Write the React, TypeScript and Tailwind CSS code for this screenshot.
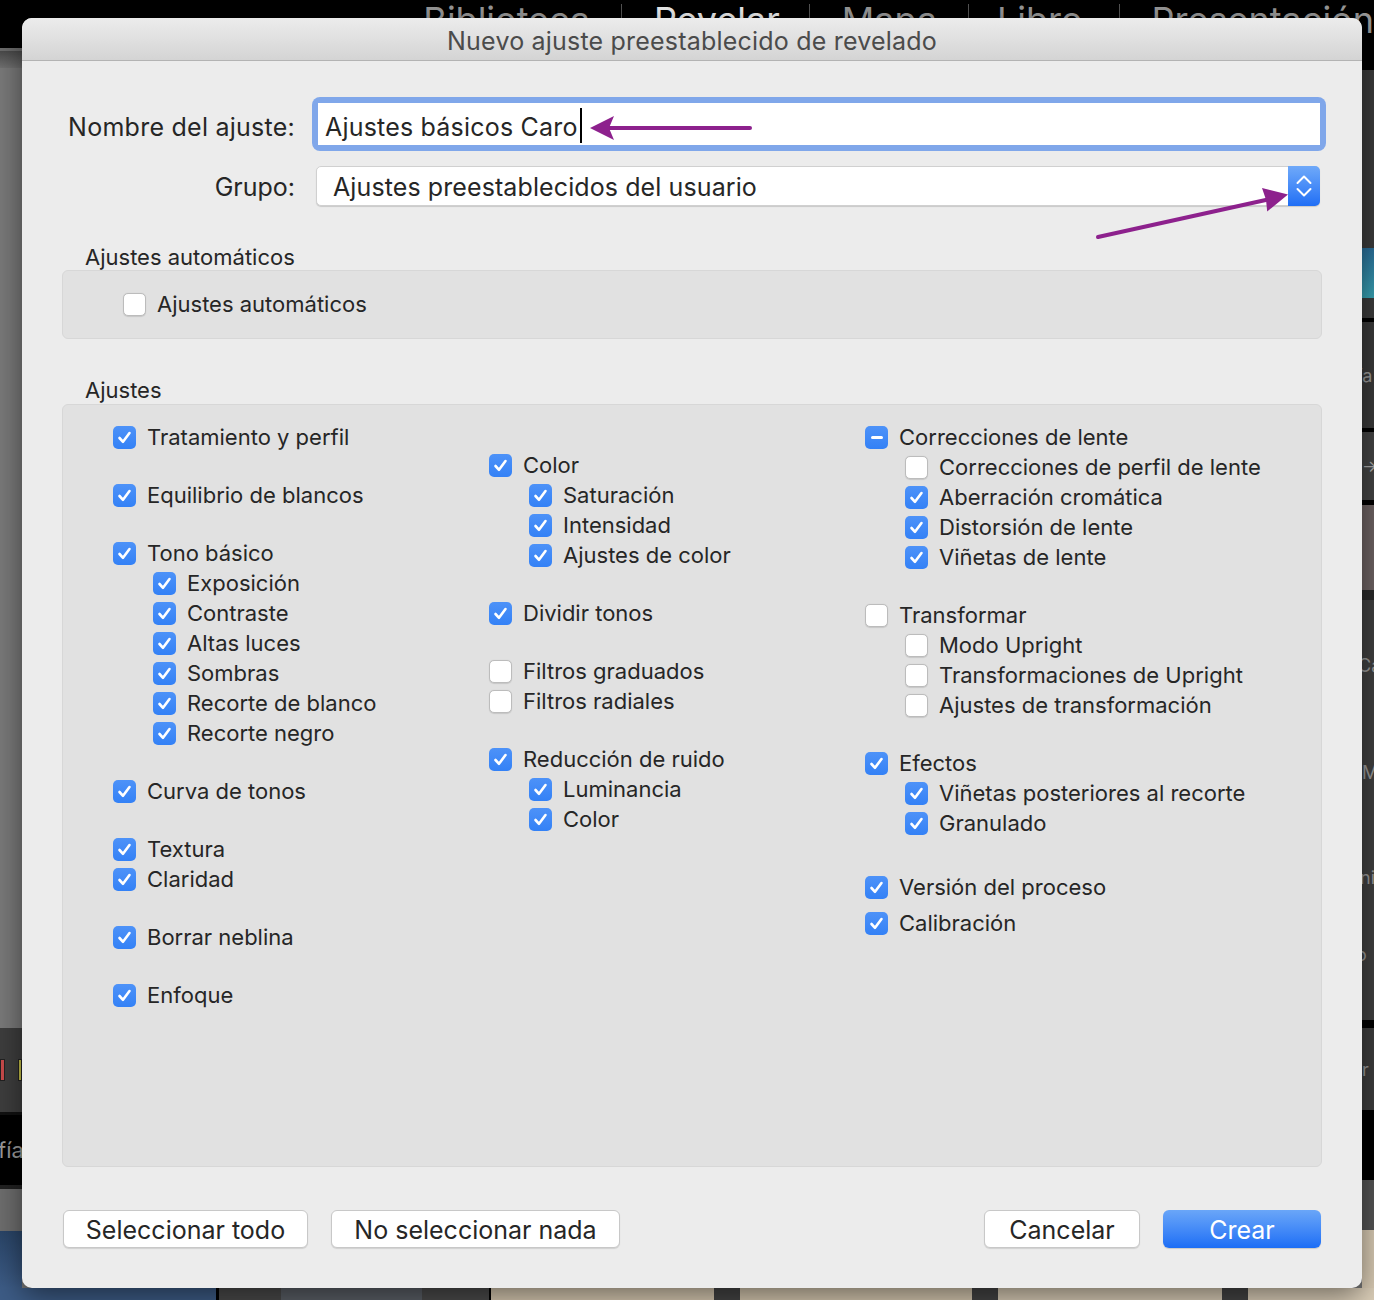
import React from "react";

type St = "on" | "off" | "mixed";
type Item = { t: string; s?: St; sub?: boolean; mt?: string };

function Box({ state }: { state: St }) {
  if (state === "off")
    return (
      <span className="w-[23px] h-[23px] shrink-0 rounded-[5px] bg-white border border-[#bcbcbc] shadow-[0_0.5px_1px_rgba(0,0,0,0.12)]" />
    );
  return (
    <span className="w-[23px] h-[23px] shrink-0 rounded-[5px] bg-gradient-to-b from-[#4d92f8] to-[#3381f6] flex items-center justify-center">
      {state === "on" ? (
        <svg width="23" height="23" viewBox="0 0 23 23">
          <path d="M6.5 12 L10 15.8 L16.5 7" fill="none" stroke="white" strokeWidth="2.6" strokeLinecap="round" strokeLinejoin="round" />
        </svg>
      ) : (
        <span className="w-[12px] h-[3px] rounded-full bg-white" />
      )}
    </span>
  );
}

function Row({ it }: { it: Item }) {
  return (
    <div className={`h-[30px] flex items-center gap-[11px] ${it.sub ? "pl-[40px]" : ""} ${it.mt ?? ""}`}>
      <Box state={it.s ?? "on"} />
      <span className="text-[22px] text-[#262626] whitespace-nowrap">{it.t}</span>
    </div>
  );
}

const col1: Item[] = [
  { t: "Tratamiento y perfil" },
  { t: "Equilibrio de blancos", mt: "mt-[28px]" },
  { t: "Tono básico", mt: "mt-[28px]" },
  { t: "Exposición", sub: true },
  { t: "Contraste", sub: true },
  { t: "Altas luces", sub: true },
  { t: "Sombras", sub: true },
  { t: "Recorte de blanco", sub: true },
  { t: "Recorte negro", sub: true },
  { t: "Curva de tonos", mt: "mt-[28px]" },
  { t: "Textura", mt: "mt-[28px]" },
  { t: "Claridad" },
  { t: "Borrar neblina", mt: "mt-[28px]" },
  { t: "Enfoque", mt: "mt-[28px]" },
];

const col2: Item[] = [
  { t: "Color", mt: "mt-[28px]" },
  { t: "Saturación", sub: true },
  { t: "Intensidad", sub: true },
  { t: "Ajustes de color", sub: true },
  { t: "Dividir tonos", mt: "mt-[28px]" },
  { t: "Filtros graduados", s: "off", mt: "mt-[28px]" },
  { t: "Filtros radiales", s: "off" },
  { t: "Reducción de ruido", mt: "mt-[28px]" },
  { t: "Luminancia", sub: true },
  { t: "Color", sub: true },
];

const col3: Item[] = [
  { t: "Correcciones de lente", s: "mixed" },
  { t: "Correcciones de perfil de lente", s: "off", sub: true },
  { t: "Aberración cromática", sub: true },
  { t: "Distorsión de lente", sub: true },
  { t: "Viñetas de lente", sub: true },
  { t: "Transformar", s: "off", mt: "mt-[28px]" },
  { t: "Modo Upright", s: "off", sub: true },
  { t: "Transformaciones de Upright", s: "off", sub: true },
  { t: "Ajustes de transformación", s: "off", sub: true },
  { t: "Efectos", mt: "mt-[28px]" },
  { t: "Viñetas posteriores al recorte", sub: true },
  { t: "Granulado", sub: true },
  { t: "Versión del proceso", mt: "mt-[34px]" },
  { t: "Calibración", mt: "mt-[6px]" },
];

function Btn({ w, children }: { w: string; children: React.ReactNode }) {
  return (
    <div className={`${w} h-[38px] rounded-[6px] bg-white border border-[#c8c8c8] shadow-[0_1px_1px_rgba(0,0,0,0.12)] flex items-center justify-center pt-[3px] text-[25px] text-[#262626]`}>
      {children}
    </div>
  );
}

export default function App() {
  return (
    <div className="relative w-[1374px] h-[1300px] overflow-hidden bg-black font-['Inter','Liberation_Sans',sans-serif]">
      {/* background application */}
      <div className="flex flex-col w-full h-full">
        <div className="h-[48px] bg-black flex items-start shrink-0 overflow-hidden">
          <div className="w-[440px]" />
          <div className="w-[228px] pl-[15px] text-[36px] leading-[40px] text-[#9a9a9a]">Biblioteca</div>
          <div className="w-px h-[40px] mt-[4px] bg-[#555]" />
          <div className="w-[199px] pl-[32px] text-[36px] leading-[40px] text-[#f0f0f0]">Revelar</div>
          <div className="w-px h-[40px] mt-[4px] bg-[#555]" />
          <div className="w-[168px] pl-[32px] text-[36px] leading-[40px] text-[#9a9a9a]">Mapa</div>
          <div className="w-px h-[40px] mt-[4px] bg-[#555]" />
          <div className="w-[159px] pl-[28px] text-[36px] leading-[40px] text-[#9a9a9a]">Libro</div>
          <div className="w-px h-[40px] mt-[4px] bg-[#555]" />
          <div className="pl-[32px] text-[36px] leading-[40px] text-[#9a9a9a] whitespace-nowrap">Presentación</div>
        </div>
        <div className="flex-1 flex min-h-0">
          {/* left strip */}
          <div className="w-[22px] flex flex-col shrink-0">
            <div className="h-[3px] bg-[#6c6c6c]" />
            <div className="h-[17px] bg-gradient-to-b from-[#4a4a4a] to-[#717171]" />
            <div className="h-[960px] bg-[#7a7a7a]" />
            <div className="h-[84px] bg-[#3e3e3e] flex items-center gap-[13px]">
              <span className="w-[6px] h-[22px] bg-[#c94b4b] border border-[#222]" />
              <span className="w-[4px] h-[22px] bg-[#c8c24a] border border-[#222]" />
            </div>
            <div className="h-[3px] bg-[#111]" />
            <div className="h-[70px] bg-black flex items-center overflow-hidden">
              <span className="text-[22px] text-[#9a9a9a] -ml-[2px] whitespace-nowrap">fía</span>
            </div>
            <div className="h-[4px] bg-[#222]" />
            <div className="h-[42px] bg-[#6e6e6e]" />
            <div className="flex-1 bg-gradient-to-b from-[#2a4568] to-[#3d5c86]" />
          </div>
          <div className="flex-1 bg-[#777]" />
          {/* right strip */}
          <div className="w-[12px] flex flex-col shrink-0 overflow-hidden">
            <div className="h-[22px] bg-black" />
            <div className="h-[248px] bg-[#3c3c3c] flex items-end pb-[20px]">
              <span className="w-[12px] h-[50px] bg-gradient-to-b from-[#2b6f9a] to-[#39a3b3]" />
            </div>
            <div className="h-[4px] bg-black" />
            <div className="h-[106px] bg-[#3a3a3a] flex items-center text-[18px] text-[#999] -ml-[4px]">ía</div>
            <div className="h-[4px] bg-black" />
            <div className="h-[68px] bg-[#444] flex items-center text-[16px] text-[#aaa]">→</div>
            <div className="h-[5px] bg-black" />
            <div className="h-[85px] bg-[#6d6262]" />
            <div className="h-[10px] bg-[#2a2a2a]" />
            <div className="h-[420px] bg-[#404040] flex flex-col text-[18px] text-[#999]">
              <span className="mt-[52px] -ml-[4px]">Ca</span>
              <span className="mt-[80px]">M</span>
              <span className="mt-[78px] -ml-[2px]">ni</span>
              <span className="mt-[50px] -ml-[6px]">o</span>
            </div>
            <div className="h-[8px] bg-black" />
            <div className="h-[82px] bg-[#3d3d3d] flex items-center text-[18px] text-[#999]">r</div>
            <div className="h-[70px] bg-black" />
            <div className="h-[50px] bg-[#555]" />
            <div className="flex-1 bg-[#d9cbb4]" />
          </div>
        </div>
        <div className="h-[12px] shrink-0 flex">
          <div className="w-[216px] bg-[#3d5c86]" />
          <div className="w-[3px] bg-black" />
          <div className="w-[62px] bg-[#4a4a4a]" />
          <div className="w-[141px] bg-[#5a5f66]" />
          <div className="w-[67px] bg-[#4b4b4b]" />
          <div className="w-[2px] bg-black" />
          <div className="w-[223px] bg-[#d8cab2]" />
          <div className="w-[26px] bg-[#444]" />
          <div className="w-[232px] bg-[#d6c8b0]" />
          <div className="w-[26px] bg-[#444]" />
          <div className="w-[224px] bg-[#d9ccb6]" />
          <div className="w-[26px] bg-[#444]" />
          <div className="flex-1 bg-[#dccfb9]" />
        </div>
      </div>

      {/* dialog */}
      <div className="absolute left-[22px] top-[18px] w-[1340px] h-[1270px] rounded-[10px] overflow-hidden bg-[#ececec] shadow-[0_8px_30px_rgba(0,0,0,0.5)] flex flex-col">
        <div className="h-[43px] shrink-0 bg-gradient-to-b from-[#ececec] to-[#d4d4d4] border-b border-[#b3b3b3] flex items-center justify-center pt-[5px] text-[25px] tracking-[0.2px] text-[#4b4b4b]">
          Nuevo ajuste preestablecido de revelado
        </div>

        <div className="flex items-center h-[54px] mt-[36px]">
          <div className="w-[273px] text-right pt-[7px] text-[25px] tracking-[0.25px] text-[#262626]">Nombre del ajuste:</div>
          <div className="ml-[17px] w-[1014px] h-[54px] rounded-[8px] bg-[#80a7ea] p-[6px]">
            <div className="w-full h-full bg-white flex items-center pl-[7px] text-[25px] tracking-[0.2px] text-[#262626]">
              <span className="pt-[7px]">Ajustes básicos Caro</span>
              <span className="w-[2px] h-[35px] bg-black ml-[2px] mt-[3px]" />
            </div>
          </div>
        </div>

        <div className="flex items-center h-[40px] mt-[15px]">
          <div className="w-[273px] text-right pt-[4px] text-[25px] text-[#262626]">Grupo:</div>
          <div className="ml-[21px] w-[1004px] h-[40px] rounded-[5px] bg-white border border-[#d0d0d0] shadow-[0_1px_1px_rgba(0,0,0,0.15)] flex items-center">
            <span className="flex-1 pl-[16px] pt-[4px] text-[25px] tracking-[0.1px] text-[#262626]">Ajustes preestablecidos del usuario</span>
            <div className="w-[32px] h-[40px] -mr-px rounded-r-[5px] bg-gradient-to-b from-[#6fa9f9] to-[#1f6ef5] flex items-center justify-center">
              <svg width="32" height="40" viewBox="0 0 32 40">
                <path d="M9.5 17 L16 10.5 L22.5 17" fill="none" stroke="white" strokeWidth="2" strokeLinecap="round" strokeLinejoin="round" />
                <path d="M9.5 23 L16 29.5 L22.5 23" fill="none" stroke="white" strokeWidth="2" strokeLinecap="round" strokeLinejoin="round" />
              </svg>
            </div>
          </div>
        </div>

        <div className="mt-[38px] h-[26px] pl-[63px] text-[22px] leading-[26px] text-[#262626]">Ajustes automáticos</div>
        <div className="mx-[40px] h-[69px] rounded-[6px] bg-[#e1e1e1] border border-[#d7d7d7] flex items-center pl-[60px] gap-[11px]">
          <Box state="off" />
          <span className="text-[22px] text-[#262626]">Ajustes automáticos</span>
        </div>

        <div className="mt-[38px] h-[26px] pl-[63px] text-[22px] leading-[26px] text-[#262626]">Ajustes</div>
        <div className="mt-[1px] mx-[40px] h-[763px] rounded-[6px] bg-[#e1e1e1] border border-[#d7d7d7] pt-[17px] pl-[50px] grid grid-cols-[376px_376px_1fr] content-start">
          <div className="flex flex-col">
            {col1.map((it, i) => (
              <Row key={i} it={it} />
            ))}
          </div>
          <div className="flex flex-col">
            {col2.map((it, i) => (
              <Row key={i} it={it} />
            ))}
          </div>
          <div className="flex flex-col">
            {col3.map((it, i) => (
              <Row key={i} it={it} />
            ))}
          </div>
        </div>

        <div className="mt-[43px] px-[41px] flex justify-between">
          <div className="flex gap-[23px]">
            <Btn w="w-[245px]">Seleccionar todo</Btn>
            <Btn w="w-[289px]">No seleccionar nada</Btn>
          </div>
          <div className="flex gap-[23px]">
            <Btn w="w-[156px]">Cancelar</Btn>
            <div className="w-[158px] h-[38px] rounded-[6px] bg-gradient-to-b from-[#6aa6f8] to-[#1b6df5] shadow-[0_1px_1px_rgba(0,0,0,0.15)] flex items-center justify-center pt-[3px] text-[25px] text-white">
              Crear
            </div>
          </div>
        </div>
      </div>

      {/* annotation arrows */}
      <svg className="absolute left-0 top-0 pointer-events-none" width="1374" height="1300" viewBox="0 0 1374 1300">
        <line x1="608" y1="128" x2="750" y2="128" stroke="#8d218d" strokeWidth="4" strokeLinecap="round" />
        <polygon points="590,128 614,116 609,128 614,140" fill="#8d218d" />
        <line x1="1098" y1="237" x2="1268" y2="199.5" stroke="#8d218d" strokeWidth="4" strokeLinecap="round" />
        <polygon points="1288,194.5 1267.2,211.5 1266,199.8 1262,188" fill="#8d218d" />
      </svg>
    </div>
  );
}
